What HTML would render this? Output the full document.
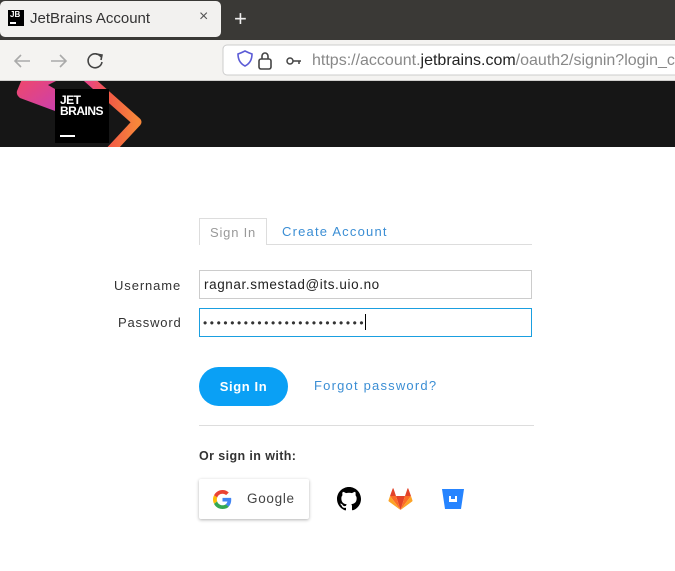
<!DOCTYPE html>
<html><head><meta charset="utf-8"><style>
*{box-sizing:border-box;margin:0;padding:0}
body{width:675px;height:571px;overflow:hidden;background:#fff;font-family:"Liberation Sans",sans-serif;position:relative}
.abs{position:absolute}
</style></head><body>
<div class="abs" style="left:0;top:0;width:675px;height:40px;background:#3a3936"></div>
<div class="abs" style="left:0;top:1px;width:221px;height:36px;background:#f2f1ef;border-radius:5px"></div>
<div class="abs" style="left:8px;top:10px;width:16px;height:16px;background:#000;color:#fff;font:bold 8px 'Liberation Sans';padding:1px 0 0 2px;line-height:8px">JB<div style="width:6px;height:1.5px;background:#fff;margin-top:3px"></div></div>
<div class="abs" style="left:30px;top:10px;font-size:15px;color:#333">JetBrains Account</div>
<div class="abs" style="left:199px;top:8px;font-size:16px;color:#555">×</div>
<div class="abs" style="left:234px;top:6px;font-size:22px;color:#eee;font-weight:300">+</div>
<div class="abs" style="left:0;top:40px;width:675px;height:41px;background:#f4f3f1;border-bottom:1px solid #d0cfcd"></div>
<svg class="abs" style="left:0;top:40px" width="675" height="41">
<g fill="none" stroke="#aaa" stroke-width="1.6"><path d="M30 21H15M21 15l-6 6 6 6"/><path d="M51 21h15M60 15l6 6-6 6"/></g>
<path d="M101 17a7 7 0 1 0 1 5" fill="none" stroke="#444" stroke-width="1.6"/><path d="M96 14l6 1-1 5" fill="none" stroke="#444" stroke-width="1.6"/>
<rect x="223" y="5" width="460" height="30" rx="4" fill="#fff" stroke="#ccc"/>
<path d="M238 14c3-1 5-2 7-3 2 1 4 2 7 3 0 6-3 10-7 12-4-2-7-6-7-12z" fill="none" stroke="#5b5bd6" stroke-width="1.6"/>
<rect x="259" y="19" width="12" height="10" rx="2" fill="none" stroke="#444" stroke-width="1.6"/><path d="M262 19v-3a3 3 0 0 1 6 0v3" fill="none" stroke="#444" stroke-width="1.6"/>
<circle cx="290" cy="21" r="3" fill="none" stroke="#444" stroke-width="1.5"/><path d="M293 21h8M299 21v3" stroke="#444" stroke-width="1.5"/>
</svg>
<div class="abs" style="left:312px;top:52px;font-size:16px;color:#888;white-space:nowrap">https://account.<span style="color:#222">jetbrains.com</span>/oauth2/signin?login_c</div>
<div class="abs" style="left:0;top:81px;width:675px;height:66px;background:#161616;overflow:hidden">
<svg class="abs" style="left:0;top:0" width="160" height="66"><defs><linearGradient id="g" x1="0" x2="1"><stop offset="0" stop-color="#e8428f"/><stop offset="0.5" stop-color="#f25c45"/><stop offset="1" stop-color="#f7873a"/></linearGradient><linearGradient id="p" x1="0" x2="1" y1="0" y2="1"><stop offset="0" stop-color="#f0486a"/><stop offset="1" stop-color="#c93fb0"/></linearGradient></defs>
<path d="M22 -2 L17 10 Q16 14 20 17 L55 30 L55 8 L48 4 L60 -2 Z" fill="url(#p)"/>
<polyline points="84,-6 137,41 110,70" fill="none" stroke="url(#g)" stroke-width="9" stroke-linejoin="round"/></svg>
<div class="abs" style="left:55px;top:8px;width:54px;height:54px;background:#000;color:#fff;font:bold 12px 'Liberation Sans';line-height:11px;padding:6px 0 0 5px;letter-spacing:-0.5px">JET<br>BRAINS<div style="width:15px;height:2px;background:#fff;margin-top:18px"></div></div>
</div>
<div class="abs" style="left:199px;top:218px;width:68px;height:27px;border:1px solid #ddd;border-bottom:none;background:#fff;color:#999;font-size:13px;padding:6px 0 0 10px;letter-spacing:0.8px">Sign In</div>
<div class="abs" style="left:282px;top:224px;color:#3b8ed4;font-size:13px;letter-spacing:1.2px">Create Account</div>
<div class="abs" style="left:267px;top:244px;width:265px;height:1px;background:#ddd"></div>
<div class="abs" style="left:114px;top:278px;font-size:13px;color:#333;letter-spacing:0.9px">Username</div>
<div class="abs" style="left:118px;top:315px;font-size:13px;color:#333;letter-spacing:0.8px">Password</div>
<div class="abs" style="left:199px;top:270px;width:333px;height:29px;border:1px solid #ccc;font-size:13.5px;color:#222;padding:6px 0 0 4px;letter-spacing:0.6px">ragnar.smestad@its.uio.no</div>
<div class="abs" style="left:199px;top:308px;width:333px;height:29px;border:1px solid #1a9fe0;font-size:12px;color:#333;padding:5px 0 0 3px;letter-spacing:2.6px;white-space:nowrap">••••••••••••••••••••••••<span style="display:inline-block;width:1px;height:16px;background:#000;vertical-align:-3px;margin-left:-1px"></span></div>
<div class="abs" style="left:199px;top:367px;width:89px;height:39px;border-radius:20px;background:#0aa0f5;color:#fff;font-weight:bold;font-size:13px;text-align:center;line-height:39px;letter-spacing:0.6px">Sign In</div>
<div class="abs" style="left:314px;top:378px;color:#3b8ed4;font-size:13px;letter-spacing:1.2px">Forgot password?</div>
<div class="abs" style="left:199px;top:425px;width:335px;height:1px;background:#ddd"></div>
<div class="abs" style="left:199px;top:449px;font-size:12.5px;font-weight:bold;color:#333;letter-spacing:0.4px">Or sign in with:</div>
<div class="abs" style="left:199px;top:479px;width:110px;height:40px;border-radius:2px;box-shadow:0 1px 3px rgba(0,0,0,.3);background:#fff"></div>
<svg class="abs" style="left:213px;top:490px" width="19" height="19" viewBox="0 0 48 48"><path fill="#EA4335" d="M24 9.5c3.5 0 6.6 1.2 9.1 3.6l6.8-6.8C35.8 2.4 30.3 0 24 0 14.6 0 6.6 5.4 2.6 13.2l7.9 6.2C12.4 13.6 17.7 9.5 24 9.5z"/><path fill="#4285F4" d="M46.1 24.5c0-1.6-.1-3.1-.4-4.5H24v9h12.4c-.5 2.9-2.2 5.4-4.7 7.1l7.6 5.9c4.4-4.1 6.8-10.1 6.8-17.5z"/><path fill="#FBBC05" d="M10.5 28.6c-.5-1.4-.8-3-.8-4.6s.3-3.2.8-4.6l-7.9-6.2C.9 16.5 0 20.1 0 24s.9 7.5 2.6 10.8l7.9-6.2z"/><path fill="#34A853" d="M24 48c6.5 0 11.9-2.1 15.9-5.8l-7.6-5.9c-2.1 1.4-4.9 2.3-8.3 2.3-6.3 0-11.6-4.2-13.5-9.9l-7.9 6.2C6.6 42.6 14.6 48 24 48z"/></svg>
<div class="abs" style="left:247px;top:491px;font-size:13.5px;color:#444;letter-spacing:0.7px">Google</div>
<svg class="abs" style="left:337px;top:487px" width="24" height="24" viewBox="0 0 16 16"><path d="M8 0C3.6 0 0 3.6 0 8c0 3.5 2.3 6.5 5.5 7.6.4.1.5-.2.5-.4v-1.4c-2.2.5-2.7-1-2.7-1-.4-.9-.9-1.2-.9-1.2-.7-.5.1-.5.1-.5.8.1 1.2.8 1.2.8.7 1.2 1.900.9 2.3.7.1-.5.3-.9.5-1.1-1.8-.2-3.6-.9-3.6-4 0-.9.3-1.6.8-2.1-.1-.2-.4-1 .1-2.1 0 0 .7-.2 2.2.8.6-.2 1.3-.3 2-.3s1.4.1 2 .3c1.5-1 2.2-.8 2.2-.8.4 1.1.2 1.9.1 2.1.5.6.8 1.3.8 2.1 0 3.1-1.9 3.7-3.6 3.9.3.3.5.8.5 1.5v2.2c0 .2.1.5.6.4C13.7 14.5 16 11.5 16 8c0-4.4-3.6-8-8-8z"/></svg>
<svg class="abs" style="left:388px;top:487px" width="25" height="24" viewBox="0 0 25 24"><path d="M12.5 23L17 9H8z" fill="#e24329"/><path d="M12.5 23L8 9H2z" fill="#fc6d26"/><path d="M2 9L0.5 13.5c-.1.4 0 .8.4 1L12.5 23z" fill="#fca326"/><path d="M2 9h6L5.5 1.5c-.1-.4-.7-.4-.8 0z" fill="#e24329"/><path d="M12.5 23L17 9h6z" fill="#fc6d26"/><path d="M23 9l1.5 4.5c.1.4 0 .8-.4 1L12.5 23z" fill="#fca326"/><path d="M23 9h-6l2.5-7.5c.1-.4.7-.4.8 0z" fill="#e24329"/></svg>
<svg class="abs" style="left:441px;top:487px" width="24" height="24" viewBox="0 0 24 24"><path d="M1 2h22l-3 20H4z" fill="#2684ff"/><rect x="8" y="9" width="8" height="6" fill="#fff"/><rect x="10" y="9" width="4" height="3" fill="#2684ff"/></svg>
</body></html>
